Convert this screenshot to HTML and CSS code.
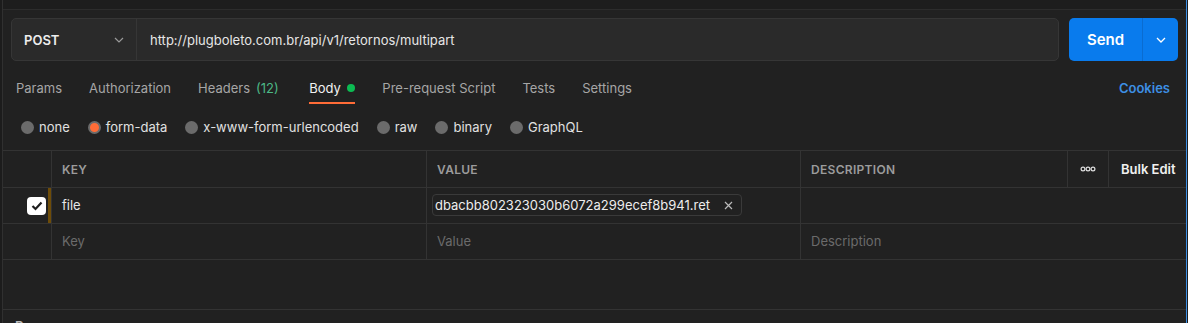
FILE: index.html
```html
<!DOCTYPE html>
<html lang="en">
<head>
  <meta charset="UTF-8" />
  <title>POST multipart</title>
  <link rel="stylesheet" href="styles.css">
</head>
<body>
  <div class="app">
    <div class="top-strip"></div>

    <div class="request-bar">
      <div class="url-group">
        <div class="method">
          <span>POST</span>
          <svg class="chev" width="10" height="6" viewBox="0 0 10 6"><path d="M1 1l4 4 4-4" fill="none" stroke="#9a9a9a" stroke-width="1.2"/></svg>
        </div>
        <div class="url">http://plugboleto.com.br/api/v1/retornos/multipart</div>
      </div>
      <div class="send">
        <span class="send-label">Send</span>
        <span class="send-more">
          <svg width="10" height="6" viewBox="0 0 10 6"><path d="M1 1l4 4 4-4" fill="none" stroke="#fff" stroke-width="1.3"/></svg>
        </span>
      </div>
    </div>

    <div class="tabs">
      <span class="tab">Params</span>
      <span class="tab">Authorization</span>
      <span class="tab headers">Headers <span class="count">(12)</span></span>
      <span class="tab active">Body <i class="dot"></i></span>
      <span class="tab">Pre-request Script</span>
      <span class="tab">Tests</span>
      <span class="tab">Settings</span>
      <span class="cookies">Cookies</span>
    </div>

    <div class="body-types">
      <label class="radio"><i></i>none</label>
      <label class="radio checked"><i></i>form-data</label>
      <label class="radio"><i></i>x-www-form-urlencoded</label>
      <label class="radio"><i></i>raw</label>
      <label class="radio"><i></i>binary</label>
      <label class="radio"><i></i>GraphQL</label>
    </div>

    <div class="params">
      <div class="cell first"></div>
      <div class="cell head">KEY</div>
      <div class="cell head">VALUE</div>
      <div class="cell head">DESCRIPTION</div>
      <div class="cell dots">
        <svg width="16" height="6" viewBox="0 0 16 6"><circle cx="3" cy="3" r="1.9" fill="none" stroke="#ddd" stroke-width="1.2"/><circle cx="8" cy="3" r="1.9" fill="none" stroke="#ddd" stroke-width="1.2"/><circle cx="13" cy="3" r="1.9" fill="none" stroke="#ddd" stroke-width="1.2"/></svg>
      </div>
      <div class="cell bulk">Bulk Edit</div>

      <div class="cell first check-cell">
        <span class="checkbox">
          <svg width="12" height="10" viewBox="0 0 12 10"><path d="M1.5 5l3 3 6-6.5" fill="none" stroke="#1e1e1e" stroke-width="2.2"/></svg>
        </span>
        <span class="marker"></span>
      </div>
      <div class="cell key">file</div>
      <div class="cell">
        <span class="file-chip">dbacbb802323030b6072a299ecef8b941.ret
          <svg width="9" height="9" viewBox="0 0 9 9"><path d="M1 1l7 7M8 1l-7 7" stroke="#bbb" stroke-width="1.2"/></svg>
        </span>
      </div>
      <div class="cell span3"></div>

      <div class="cell first"></div>
      <div class="cell placeholder">Key</div>
      <div class="cell placeholder">Value</div>
      <div class="cell placeholder span3">Description</div>
    </div>

    <div class="gap-area"></div>
    <div class="response">Response</div>
  </div>
</body>
</html>
```

FILE: styles.css
```css
body {
  margin: 0;
  background-color: #1c1c1c;
  font-family: Inter, "Noto Sans", sans-serif;
  font-size: 13px;
  color: #e6e6e6;
  overflow: hidden;
}

.app {
  width: 1183px;
  height: 323px;
  margin-left: 2px;
  background-color: #212121;
  border-left: 1px solid #303030;
  border-right: 1px solid #3d8fe4;
  overflow: hidden;
}

.top-strip {
  height: 9px;
  background-color: #1d1d1d;
  border-bottom: 1px solid #2c2c2c;
}

.request-bar {
  display: flex;
  gap: 10px;
  padding: 8px 8px 0 8px;
  height: 43px;
}

.url-group {
  flex: 1;
  display: flex;
  background-color: #2a2a2a;
  border: 1px solid #363636;
  border-radius: 5px;
}

.method {
  width: 125px;
  box-sizing: border-box;
  display: flex;
  align-items: center;
  justify-content: space-between;
  padding: 0 12px 0 12px;
  border-right: 1px solid #363636;
  font-weight: 600;
  color: #ededed;
}

.url {
  display: flex;
  align-items: center;
  padding-left: 13px;
  color: #e6e6e6;
}

.send {
  width: 109px;
  display: flex;
  background-color: #097bed;
  border-radius: 5px;
  color: #fff;
}

.send-label {
  width: 73px;
  display: flex;
  align-items: center;
  justify-content: center;
  font-size: 15px;
  font-weight: 600;
  border-right: 1px solid #0a6cd0;
}

.send-more {
  flex: 1;
  display: flex;
  align-items: center;
  justify-content: center;
}

.tabs {
  display: flex;
  align-items: center;
  height: 37px;
  margin-top: 8px;
  padding-left: 13px;
}

.tab {
  position: relative;
  margin-right: 27px;
  color: #a6a6a6;
  height: 37px;
  display: flex;
  align-items: center;
  gap: 4px;
}

.tab.headers {
  gap: 6px;
  margin-right: 30.5px;
}

.tab.active {
  color: #f2f2f2;
  margin-right: 27.5px;
}

.tab .count {
  color: #4cb886;
}

.tab.active::after {
  content: "";
  position: absolute;
  left: 0;
  right: 0;
  bottom: 2px;
  height: 2px;
  background-color: #ff6c37;
}

.dot {
  display: inline-block;
  width: 8px;
  height: 8px;
  border-radius: 50%;
  background-color: #0cbb52;
  margin-left: 2px;
}

.cookies {
  margin-left: auto;
  margin-right: 16px;
  color: #3d8fe4;
  font-weight: 600;
}

.body-types {
  display: flex;
  align-items: center;
  height: 42px;
  padding-left: 18px;
}

.radio {
  display: flex;
  align-items: center;
  margin-right: 18px;
  color: #e0e0e0;
}

.radio i {
  width: 13px;
  height: 13px;
  border-radius: 50%;
  background-color: #6b6b6b;
  margin-right: 5px;
  box-sizing: border-box;
}

.radio.checked i {
  background-color: #ff6c37;
  border: 2px solid #6b6b6b;
}

.params {
  margin-top: 2px;
  display: grid;
  grid-template-columns: 48px 375px 374px 267px 41px 1fr;
  grid-template-rows: 37px 36px 36px;
  border-top: 1px solid #333;
}

.cell {
  border-left: 1px solid #333;
  border-bottom: 1px solid #333;
  display: flex;
  align-items: center;
  padding-left: 10px;
  color: #e6e6e6;
}

.cell.first {
  border-left: none;
  padding-left: 0;
}

.head {
  font-size: 12px;
  font-weight: 600;
  color: #9c9c9c;
  letter-spacing: 0.3px;
}

.dots {
  justify-content: center;
  padding-left: 0;
}

.bulk {
  font-weight: 600;
  color: #f0f0f0;
  padding-left: 12px;
}

.span3 {
  grid-column: span 3;
}

.check-cell {
  justify-content: flex-end;
}

.checkbox {
  width: 19px;
  height: 18px;
  background-color: #fff;
  border-radius: 4px;
  display: flex;
  align-items: center;
  justify-content: center;
  margin-right: 2px;
}

.marker {
  align-self: stretch;
  width: 3px;
  background-color: #6e4c08;
}

.key,
.placeholder {
  padding-left: 10px;
  padding-bottom: 2px;
}

.placeholder {
  color: #6b6b6b;
}

.file-chip {
  display: inline-flex;
  align-items: center;
  gap: 14px;
  height: 20px;
  padding: 0 8px 0 2px;
  margin-left: -5px;
  margin-bottom: 1px;
  border: 1px solid #3a3a3a;
  border-radius: 4px;
  color: #ededed;
}

.gap-area {
  height: 49px;
  border-bottom: 1px solid #333;
}

.response {
  padding: 8px 0 0 12px;
  color: #bbb;
  font-weight: 600;
}
```
